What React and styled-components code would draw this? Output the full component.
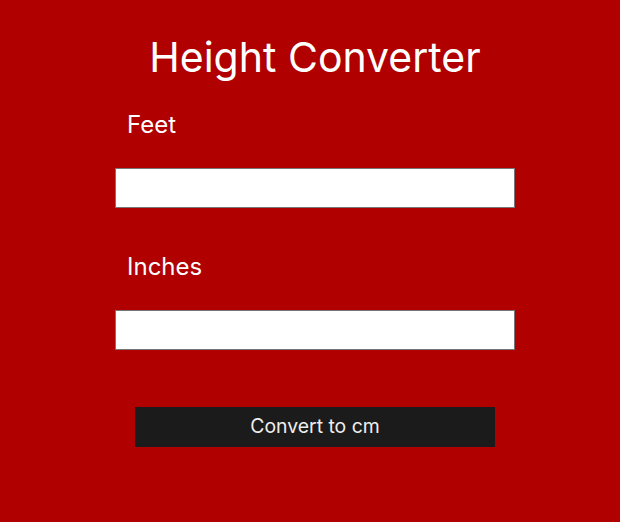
import styled, { createGlobalStyle } from 'styled-components'

const GlobalStyle = createGlobalStyle`
    html, body {
        margin: 0;
        padding: 0;
        background-color: #b00000;
    }
    body {
        font-family: Inter, "Liberation Sans", sans-serif;
        color: #ffffff;
    }
`

export default function App() {
    return (
        <Page>
            <GlobalStyle />
            <Title>Height Converter</Title>
            <Form onSubmit={(e) => e.preventDefault()}>
                <Field>
                    <Label htmlFor="feet">Feet</Label>
                    <Input id="feet" type="text" />
                </Field>
                <Field>
                    <Label htmlFor="inches">Inches</Label>
                    <Input id="inches" type="text" />
                </Field>
                <ConvertButton type="submit">Convert to cm</ConvertButton>
            </Form>
        </Page>
    )
}

const Page = styled.main`
    width: 620px;
    min-height: 522px;
    box-sizing: border-box;
    padding: 32px 0 0 10px;
    display: flex;
    flex-direction: column;
    align-items: center;
`

const Title = styled.h1`
    margin: 0 0 28px 0;
    font-size: 41px;
    line-height: 50px;
    font-weight: 400;
    text-align: center;
`

const Form = styled.form`
    width: 400px;
    display: flex;
    flex-direction: column;
    gap: 44px;
`

const Field = styled.div`
    display: flex;
    flex-direction: column;
    gap: 29px;
`

const Label = styled.label`
    padding-left: 12px;
    font-size: 24px;
    line-height: 29px;
`

const Input = styled.input`
    box-sizing: border-box;
    width: 400px;
    height: 40px;
    margin: 0;
    padding: 0 8px;
    border: 1px solid #767676;
    background: #ffffff;
    font-family: inherit;
    font-size: 16px;
`

const ConvertButton = styled.button`
    align-self: center;
    width: 360px;
    height: 40px;
    margin-top: 13px;
    padding: 0 0 2px 0;
    border: none;
    background-color: #1c1b1c;
    color: #eeeeee;
    font-family: inherit;
    font-size: 19.4px;
    line-height: 38px;
    cursor: pointer;
`
